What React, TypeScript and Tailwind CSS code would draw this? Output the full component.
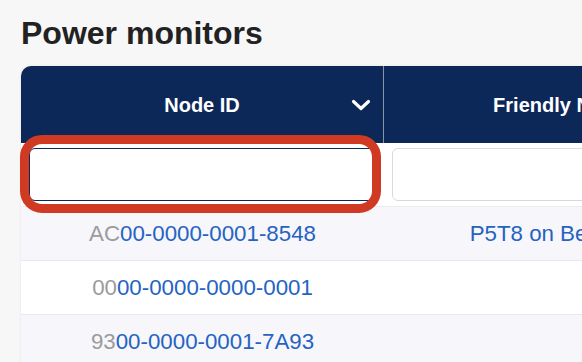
import React from "react";

const rows = [
  { pre: "AC", id: "00-0000-0001-8548", name: "P5T8 on Bench 12" },
  { pre: "00", id: "00-0000-0000-0001", name: "" },
  { pre: "93", id: "00-0000-0001-7A93", name: "" },
];

export default function App() {
  return (
    <div
      className="w-[582px] h-[362px] overflow-hidden bg-[#f7f7f7] pl-[21px] pt-[15px]"
      style={{ fontFamily: '"Liberation Sans", Arial, sans-serif' }}
    >
      <h1 className="text-[32px] leading-[36px] font-bold text-[#222222] mb-[15px]">Power monitors</h1>
      <div className="relative w-[760px]">
        <div className="rounded-tl-[10px] overflow-hidden bg-white shadow-[0_0_3px_rgba(0,0,0,0.08)]">
          {/* header */}
          <div className="flex h-[77px] bg-[#0c2859] text-white text-[20px] font-bold">
            <div className="w-[363px] grid grid-cols-[1fr_auto_1fr] items-center border-r border-[#8a93a6]">
              <div />
              <div>Node ID</div>
              <div className="flex justify-end pr-[12px]">
                <svg width="20" height="12" viewBox="0 0 20 12" fill="none">
                  <path d="M2.5 2.5 L10 9.5 L17.5 2.5" stroke="white" strokeWidth="3.2" strokeLinecap="round" strokeLinejoin="round" />
                </svg>
              </div>
            </div>
            <div className="w-[356px] flex items-center justify-center">Friendly Name</div>
          </div>
          {/* filter row */}
          <div className="flex h-[64px] bg-white border-b border-[#ececf0]">
            <div className="w-[363px] px-[8px] flex items-center">
              <div className="w-full h-[53px] rounded-[6px] border border-[#0c2859] bg-white" />
            </div>
            <div className="w-[356px] px-[8px] flex items-center">
              <div className="w-full h-[53px] rounded-[6px] border border-[#d9d9d9] bg-white" />
            </div>
          </div>
          {rows.map((r, i) => (
            <div
              key={i}
              className={`flex h-[54px] border-b border-[#e8e8ee] text-[22.3px] ${i % 2 === 0 ? "bg-[#f6f6fb]" : "bg-white"}`}
            >
              <div className="w-[363px] flex items-center justify-center">
                <span className="text-[#9b9b9b]">{r.pre}</span>
                <span className="text-[#2563c2]">{r.id}</span>
              </div>
              <div className="w-[356px] flex items-center justify-center text-[#2563c2]">{r.name}</div>
            </div>
          ))}
        </div>
        <div className="absolute left-[-1px] top-[69px] w-[361px] h-[78px] rounded-[22px] border-[9px] border-[#d03a22]" />
      </div>
    </div>
  );
}
